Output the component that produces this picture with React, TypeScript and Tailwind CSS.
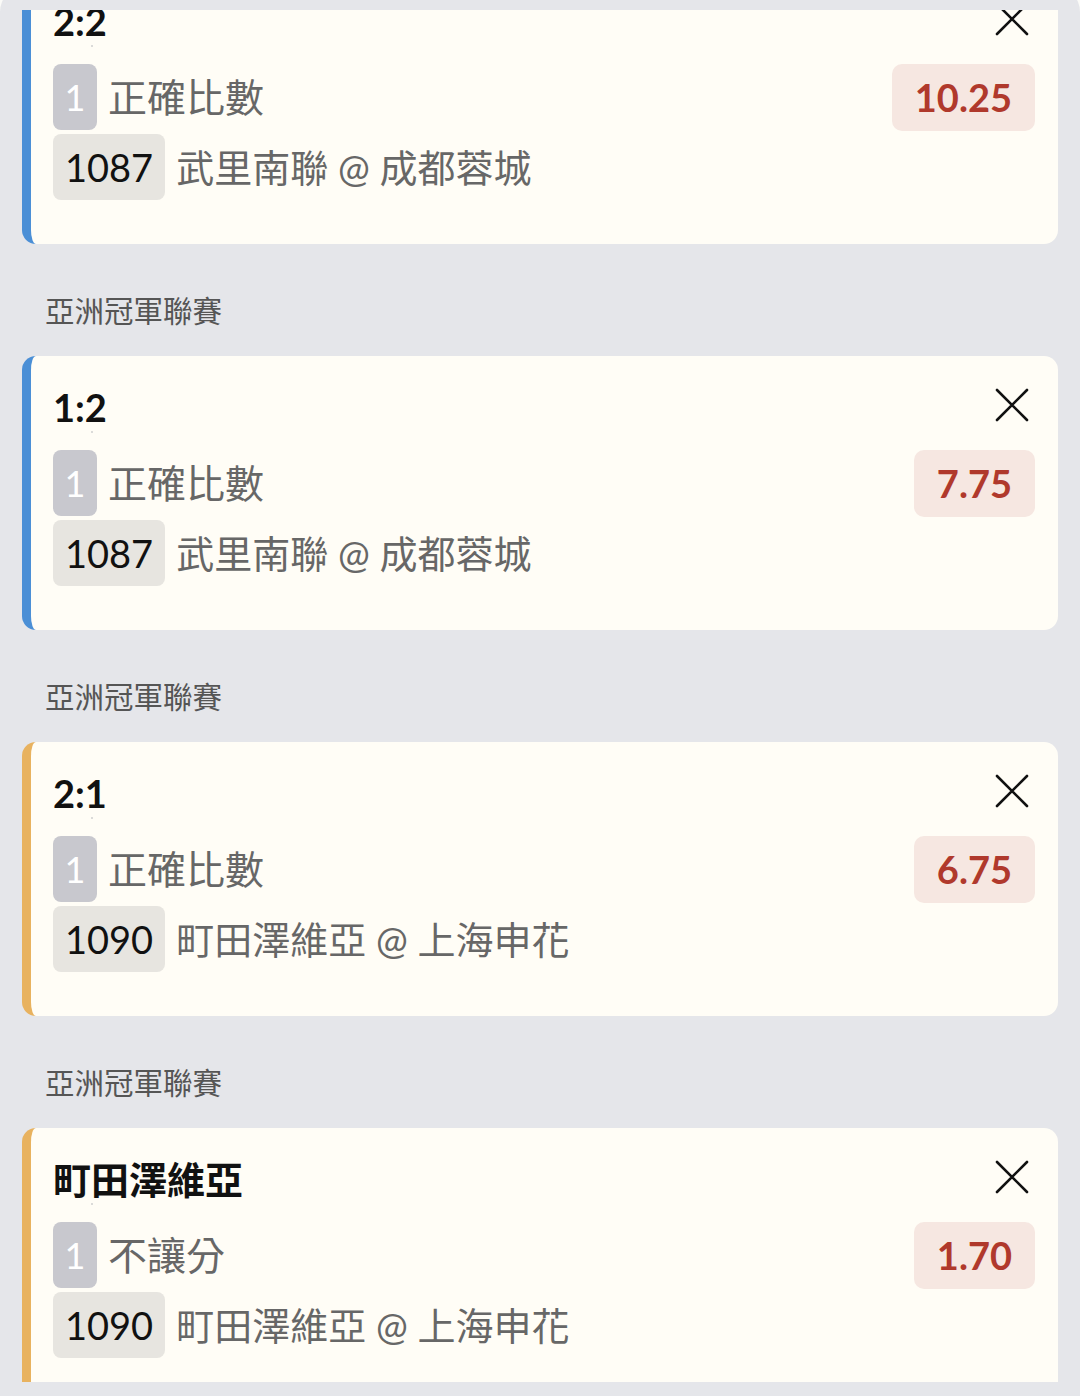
import React from "react";

type Bet = {
  league?: string;
  title: string;
  accent: "blue" | "orange";
  market: string;
  odds: string;
  code: string;
  match: string;
};

const bets: Bet[] = [
  { title: "2:2", accent: "blue", market: "正確比數", odds: "10.25", code: "1087", match: "武里南聯 @ 成都蓉城" },
  { league: "亞洲冠軍聯賽", title: "1:2", accent: "blue", market: "正確比數", odds: "7.75", code: "1087", match: "武里南聯 @ 成都蓉城" },
  { league: "亞洲冠軍聯賽", title: "2:1", accent: "orange", market: "正確比數", odds: "6.75", code: "1090", match: "町田澤維亞 @ 上海申花" },
  { league: "亞洲冠軍聯賽", title: "町田澤維亞", accent: "orange", market: "不讓分", odds: "1.70", code: "1090", match: "町田澤維亞 @ 上海申花" },
];

const FONT = "font-['Lato','Noto_Sans_CJK_TC',sans-serif]";

function CloseIcon() {
  return (
    <svg width="34" height="34" viewBox="0 0 34 34" fill="none">
      <path d="M2 2 L32 32 M32 2 L2 32" stroke="#111" strokeWidth="2.6" strokeLinecap="round" />
    </svg>
  );
}

function Card({ bet }: { bet: Bet }) {
  return (
    <div
      className={`rounded-[14px] bg-[#fffdf6] border-l-[9px] ${
        bet.accent === "blue" ? "border-[#4b8fd6]" : "border-[#e8b25f]"
      } pl-[22px] pr-[23px] pt-[29px] pb-[44px]`}
    >
      <div className="flex items-center justify-between h-[44px]">
        <div className="text-[38px] leading-[44px] font-bold text-[#111]">{bet.title}</div>
        <div className="mr-[6px] -mt-[4px]">
          <CloseIcon />
        </div>
      </div>
      <div className="relative h-[21px]">
        <div className="absolute left-[38px] top-[2px] w-[2px] h-[2px] rounded-full bg-[#cfcfcf]" />
      </div>
      <div className="flex items-center justify-between h-[66px]">
        <div className="flex items-center gap-[11px]">
          <div className="w-[44px] h-[66px] rounded-[8px] bg-[#c8c8ce] flex items-center justify-center text-white text-[36px] font-normal">
            1
          </div>
          <div className="text-[39px] text-[#676767] leading-none">{bet.market}</div>
        </div>
        <div className="h-[67px] rounded-[10px] bg-[#f6e7e1] px-[23px] flex items-center text-[38px] font-bold text-[#b0392c]">
          {bet.odds}
        </div>
      </div>
      <div className="flex items-center gap-[11px] mt-[4px] h-[66px]">
        <div className="h-[66px] rounded-[8px] bg-[#e7e5e0] px-[12px] flex items-center text-[38px] text-[#111]">
          {bet.code}
        </div>
        <div className="text-[38px] text-[#676767] leading-none whitespace-nowrap">{bet.match}</div>
      </div>
    </div>
  );
}

export default function App() {
  return (
    <div className={`w-[1080px] h-[1396px] overflow-hidden bg-[#fbfbf8] ${FONT}`}>
      <div className="-mt-[14px] h-[1410px] rounded-t-[26px] bg-[#e5e6ea] pt-[24px] pb-[14px] px-[22px] flex flex-col">
        <div className="flex-1 overflow-hidden">
          <div className="-mt-[40px] flex flex-col">
            {bets.map((b, i) => (
              <div key={i}>
                {b.league && (
                  <div className="mt-[48px] mb-[26px] h-[38px] flex items-center pl-[23px] text-[29.5px] text-[#555555]">
                    {b.league}
                  </div>
                )}
                <Card bet={b} />
              </div>
            ))}
          </div>
        </div>
      </div>
    </div>
  );
}
